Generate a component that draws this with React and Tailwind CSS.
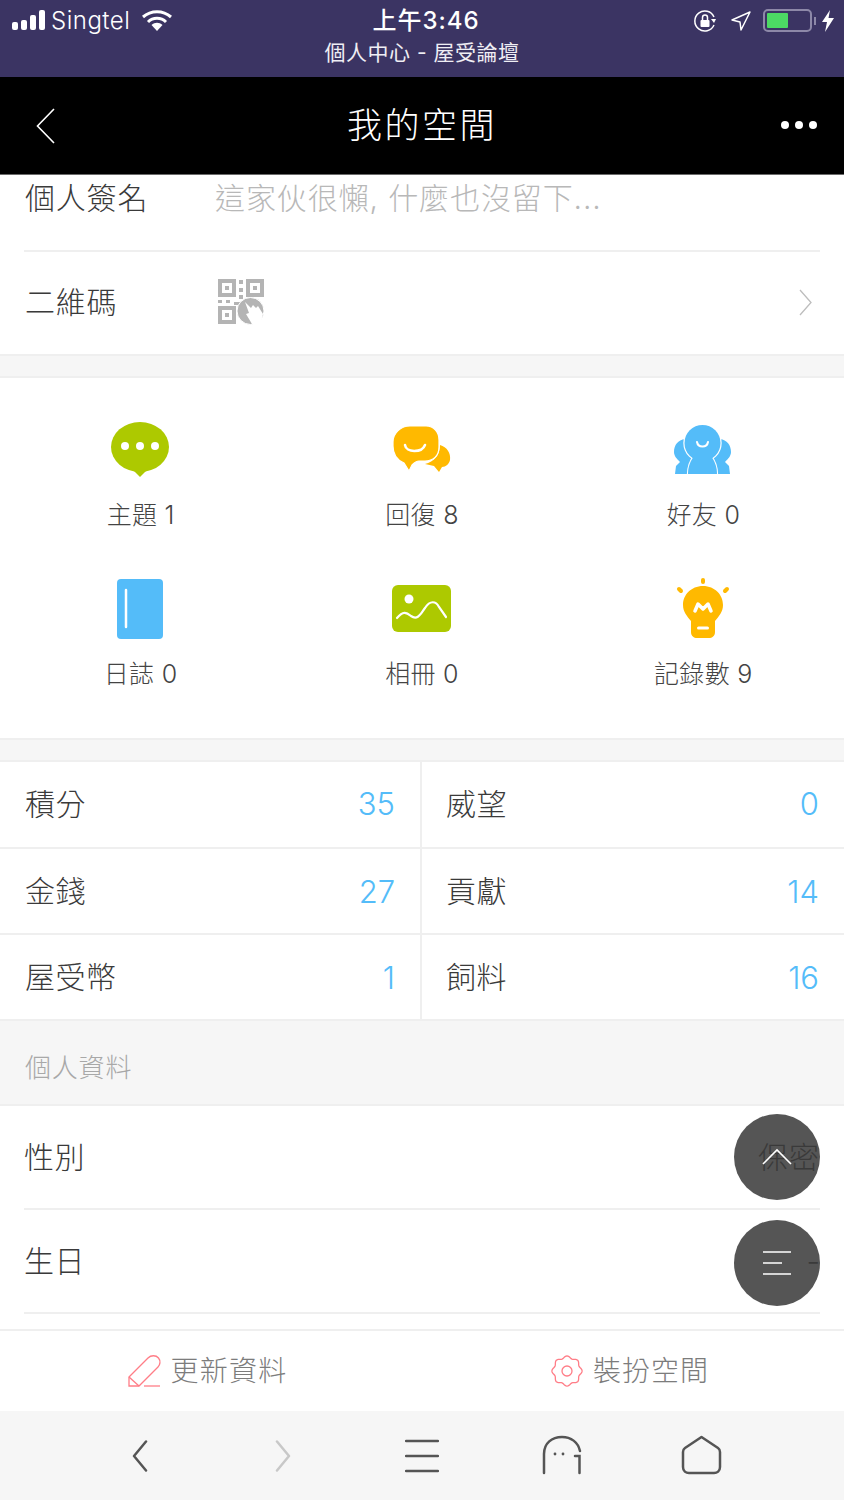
const CJK = '"Helvetica Neue", Inter, "Noto Sans CJK TC", sans-serif';

// Shortcut tiles - first row / second row
const tiles = [
  { label: '主題 1', icon: <TopicIcon /> },
  { label: '回復 8', icon: <ReplyIcon /> },
  { label: '好友 0', icon: <FriendIcon /> },
  { label: '日誌 0', icon: <DiaryIcon /> },
  { label: '相冊 0', icon: <AlbumIcon /> },
  { label: '記錄數 9', icon: <BulbIcon /> },
];

const stats = [
  { h: 'h-[87px]', pad: 'pb-[2px]', cells: [['積分', '35'], ['威望', '0']] },
  { h: 'h-[86px]', pad: '', cells: [['金錢', '27'], ['貢獻', '14']] },
  { h: 'h-[86px]', pad: '', cells: [['屋受幣', '1'], ['飼料', '16']] },
];

// Scalloped outline for the dress-up icon
function flowerPath(cx, cy, r, bump, lobes) {
  const pts = [];
  for (let i = 0; i < 96; i++) {
    const a = (i / 96) * Math.PI * 2;
    const rr = r + bump * Math.cos(lobes * a);
    pts.push(`${(cx + rr * Math.cos(a)).toFixed(2)} ${(cy + rr * Math.sin(a)).toFixed(2)}`);
  }
  return `M${pts.join(' L')} Z`;
}

function TopicIcon() {
  return (
    <svg className="-ml-[2px]" width="60" height="58" viewBox="0 0 60 58">
      <ellipse cx="30" cy="26" rx="29" ry="25" fill="#adc900" />
      <path d="M22 48 L30 56 L38 48 Z" fill="#adc900" />
      <circle cx="15" cy="25" r="4" fill="#fff" />
      <circle cx="30" cy="25" r="4" fill="#fff" />
      <circle cx="45" cy="25" r="4" fill="#fff" />
    </svg>
  );
}

function ReplyIcon() {
  return (
    <svg width="60" height="50" viewBox="0 0 60 50">
      <path d="M48 20 C55 22 59 28 58 35 C57 39 54 42 50 42 L47 47 L42 41 L33 39 C42 37 48 30 48 20 Z" fill="#ffb900" />
      <path d="M18 1 H34 C42 1 47 7 47 15 V22 C47 31 41 36 33 36 H27 C24 36 22 38 20 40 L17 46 L12 38 C5 35 1 29 1 21 V17 C1 8 9 1 18 1 Z" fill="#ffb900" stroke="#fff" strokeWidth="1.2" />
      <path d="M13 20 C14 28 30 28 33 20" fill="none" stroke="#fff" strokeWidth="2.5" strokeLinecap="round" />
    </svg>
  );
}

function FriendIcon() {
  return (
    <svg width="60" height="50" viewBox="0 0 60 50">
      {/* shoulders behind, white strokes under head + body make the gaps */}
      <path d="M12 14 C5 15 1 20 1 27 C1 31 4 34 7 37 L3 41 L2 49 H57 L56 41 L52 37 C55 34 58 31 58 27 C58 20 54 15 47 14 Z" fill="#54bcf9" />
      <circle cx="29.5" cy="18" r="18" fill="#fff" stroke="#fff" strokeWidth="2.4" />
      <path d="M22 30 C17 36 15 42 15 50 H44 C44 42 42 36 37 30 Z" fill="#fff" stroke="#fff" strokeWidth="2.4" />
      <circle cx="29.5" cy="18" r="18" fill="#54bcf9" />
      <path d="M22 30 C17 36 15 42 15 49 H44 C44 42 42 36 37 30 Z" fill="#54bcf9" />
      <path d="M24 17 C25 23 34 23 35 17" fill="none" stroke="#fff" strokeWidth="2" strokeLinecap="round" />
    </svg>
  );
}

function DiaryIcon() {
  return (
    <svg className="-ml-[2px]" width="46" height="60" viewBox="0 0 46 60">
      <rect x="0" y="0" width="46" height="60" rx="4" fill="#54bcf9" />
      <line x1="9" y1="11" x2="9" y2="48" stroke="#fff" strokeWidth="2.5" strokeLinecap="round" />
    </svg>
  );
}

function AlbumIcon() {
  return (
    <svg width="60" height="48" viewBox="0 0 60 48">
      <rect x="0" y="0" width="59" height="47" rx="6" fill="#adc900" />
      <circle cx="17" cy="14" r="4.5" fill="#fff" />
      <path d="M5 33 C11 26 14 27 19 31 C26 36 29 28 33 23 C38 15 44 16 47 22 L54 32" fill="none" stroke="#fff" strokeWidth="2.2" strokeLinecap="round" />
    </svg>
  );
}

function BulbIcon() {
  return (
    <svg width="54" height="62" viewBox="0 0 54 62">
      <g stroke="#ffb900" strokeWidth="4" strokeLinecap="round">
        <line x1="27" y1="2" x2="27" y2="4" />
        <line x1="3" y1="11" x2="5" y2="13" />
        <line x1="51" y1="11" x2="49" y2="13" />
      </g>
      <path d="M27 8 C15 8 7 17 7 27 C7 34 11 38 15 43 V54 C15 58 18 60 21 60 H33 C36 60 39 58 39 54 V43 C43 38 47 34 47 27 C47 17 39 8 27 8 Z" fill="#ffb900" />
      <path d="M19 33 L22 26 L27 31 L32 26 L35 33" fill="none" stroke="#fff" strokeWidth="3.5" strokeLinecap="round" strokeLinejoin="round" />
      <line x1="22.5" y1="50" x2="31.5" y2="50" stroke="#fff" strokeWidth="3" strokeLinecap="round" />
    </svg>
  );
}

function QrIcon() {
  return (
    <svg className="-mt-[2px]" width="48" height="48" viewBox="0 0 48 48" fill="#b4b4b4">
      <path fillRule="evenodd" d="M1 1 H19 V19 H1 Z M5 5 V15 H15 V5 Z M8 8 H12 V12 H8 Z" />
      <path fillRule="evenodd" d="M29 1 H47 V19 H29 Z M33 5 V15 H43 V5 Z M36 8 H40 V12 H36 Z" />
      <path fillRule="evenodd" d="M1 28 H19 V46 H1 Z M5 32 V42 H15 V32 Z M8 35 H12 V39 H8 Z" />
      <rect x="22" y="2" width="4" height="4" />
      <rect x="22" y="10" width="4" height="4" />
      <rect x="22" y="17" width="4" height="4" />
      <rect x="1" y="22" width="4" height="3" />
      <rect x="9" y="22" width="4" height="3" />
      <rect x="17" y="24" width="8" height="3" />
      <circle cx="33.5" cy="33" r="13.5" stroke="#fff" strokeWidth="1" />
      <path d="M28 24 L34 30 L36 27 L39 30 L41 28 L46 36 L43 46 L35 46 L29 36 L32 35 Z" fill="#fff" />
    </svg>
  );
}

function StatusBar() {
  return (
    <div className="h-[77px] bg-[#3b3463] text-white flex flex-col relative shrink-0">
      <div className="h-[41px] flex items-center justify-between pl-3 pr-[9px]">
        <div className="flex items-center w-[300px]">
          <div className="flex items-end gap-[3px] h-[21px] pb-[1px]">
            <span className="w-[6px] h-[8px] rounded-[2px] bg-white" />
            <span className="w-[6px] h-[10px] rounded-[2px] bg-white" />
            <span className="w-[6px] h-[15px] rounded-[2px] bg-white" />
            <span className="w-[6px] h-[20px] rounded-[2px] bg-white" />
          </div>
          <span className="ml-[6px] text-[24px] leading-none font-light tracking-[0.5px]">Singtel</span>
          <svg className="ml-[12px]" width="30" height="22" viewBox="0 0 30 22">
            <path d="M1 7 C9 0 21 0 29 7" fill="none" stroke="#fff" strokeWidth="3" />
            <path d="M6 12 C11 7 19 7 24 12" fill="none" stroke="#fff" strokeWidth="3" />
            <path d="M9.5 15 C13 12 17 12 20.5 15 L15 21 Z" fill="#fff" />
          </svg>
        </div>
        <span className="ml-[5px] text-[24px] leading-none font-medium tracking-[1px]">上午3:46</span>
        <div className="flex items-center justify-end w-[300px]">
          <svg width="24" height="24" viewBox="0 0 24 24" fill="none" stroke="#fff" strokeWidth="1.5">
            <path d="M21 16 A10 10 0 1 1 21 8" />
            <path d="M18 10 L23 10 L21 14 Z" fill="#fff" stroke="none" />
            <rect x="7.5" y="11" width="9" height="7" rx="1" fill="#fff" stroke="none" />
            <path d="M9.5 11 V8.5 A2.5 2.5 0 0 1 14.5 8.5 V11" />
          </svg>
          <svg className="ml-[13px]" width="22" height="22" viewBox="0 0 22 22">
            <path d="M20 2 L11 20 L10 12 L2 10 Z" fill="none" stroke="#fff" strokeWidth="1.5" strokeLinejoin="round" />
          </svg>
          <div className="ml-[11px] w-[49px] h-[23px] border-2 border-[#8d88a8] rounded-[5px] p-[2px]">
            <div className="w-[21px] h-full bg-[#4cd964] rounded-[1px]" />
          </div>
          <span className="ml-[2px] w-[2px] h-[8px] bg-[#8d88a8]" />
          <svg className="ml-[5px]" width="14" height="22" viewBox="0 0 14 22">
            <path d="M9 0 L1 12 H6 L4 22 L13 8 H7.5 Z" fill="#fff" />
          </svg>
        </div>
      </div>
      <div className="text-center text-[21px] leading-none tracking-[0.5px] text-[#efeef4] mt-[1px]">個人中心 - 屋受論壇</div>
    </div>
  );
}

function NavBar() {
  return (
    <div className="h-[98px] bg-black border-b border-[#6b6b6b] flex items-center justify-between pl-[36px] pr-[27px] shrink-0">
      <svg width="19" height="36" viewBox="0 0 19 36">
        <path d="M18 1 L1.5 18 L18 35" fill="none" stroke="#fff" strokeWidth="1.6" />
      </svg>
      <span className="text-[35px] leading-none font-light text-white tracking-[2.5px] ml-[8px]">我的空間</span>
      <div className="flex gap-[6px] -mt-[2px]">
        <span className="w-[8px] h-[8px] rounded-full bg-white" />
        <span className="w-[8px] h-[8px] rounded-full bg-white" />
        <span className="w-[8px] h-[8px] rounded-full bg-white" />
      </div>
    </div>
  );
}

function StatCell({ label, value, left, pad }) {
  return (
    <div className={`flex items-center justify-between ${pad} ${left ? 'w-[422px] pl-[25px] pr-[25px] border-r-2 border-[#efefef]' : 'flex-1 pl-[24px] pr-[25px]'}`}>
      <span className="text-[30px] font-light text-[#3a3a3a] leading-none tracking-[0.5px]">{label}</span>
      <span className="text-[31px] font-light text-[#54bcf9] leading-none">{value}</span>
    </div>
  );
}

function Fab({ children, className }) {
  return (
    <div className={`absolute right-[24px] w-[86px] h-[86px] rounded-full bg-[#555555] flex items-center justify-center ${className}`}>
      {children}
    </div>
  );
}

export default function App() {
  return (
    <div className="relative w-[844px] h-[1500px] overflow-hidden bg-white flex flex-col" style={{ fontFamily: CJK }}>
      <StatusBar />
      <NavBar />

      {/* Signature + QR rows */}
      <div className="px-[24px] shrink-0">
        <div className="h-[77px] border-b-2 border-[#efefef] flex items-start pt-[5px]">
          <span className="w-[191px] pl-[1px] text-[30px] font-light text-[#3a3a3a] leading-[36px] tracking-[0.8px]">個人簽名</span>
          <span className="text-[30px] font-light text-[#b8b8b8] leading-[36px] tracking-[0.9px]">這家伙很懶, 什麼也沒留下...</span>
        </div>
        <div className="h-[102px] flex items-center">
          <span className="w-[193px] pl-[1px] text-[30px] font-light text-[#3a3a3a] leading-none tracking-[0.8px] -mt-[2px]">二維碼</span>
          <QrIcon />
          <svg className="ml-auto mr-[8px] -mt-[2px]" width="13" height="27" viewBox="0 0 13 27">
            <path d="M1 1 L12 13.5 L1 26" fill="none" stroke="#bdbdbd" strokeWidth="1.3" />
          </svg>
        </div>
      </div>
      <div className="h-[24px] bg-[#f6f6f6] border-y-2 border-[#efefef] shrink-0" />

      {/* Shortcut tiles */}
      <div className="h-[360px] grid grid-cols-3 grid-rows-2 pt-[36px] pb-[6px] shrink-0">
        {tiles.map((t) => (
          <div key={t.label} className="flex flex-col items-center">
            <div className="h-[72px] flex items-center justify-center">{t.icon}</div>
            <span className="mt-[17px] text-[25px] font-light text-[#444444] leading-none tracking-[0.3px]">{t.label}</span>
          </div>
        ))}
      </div>
      <div className="h-[24px] bg-[#f6f6f6] border-y-2 border-[#efefef] shrink-0" />

      {/* Stats */}
      {stats.map((row) => (
        <div key={row.cells[0][0]} className={`${row.h} flex border-b-2 border-[#efefef] shrink-0`}>
          <StatCell label={row.cells[0][0]} value={row.cells[0][1]} pad={row.pad} left />
          <StatCell label={row.cells[1][0]} value={row.cells[1][1]} pad={row.pad} />
        </div>
      ))}

      {/* Profile section */}
      <div className="h-[85px] bg-[#f6f6f6] border-b-2 border-[#efefef] flex items-center pl-[25px] pt-[10px] text-[26px] font-light text-[#a8a8a8] tracking-[0.8px] shrink-0">
        個人資料
      </div>
      <div className="px-[24px] shrink-0">
        <div className="h-[104px] border-b-2 border-[#efefef] flex items-center justify-between">
          <span className="text-[30px] font-light text-[#3a3a3a] leading-none tracking-[0.5px]">性別</span>
          <span className="relative z-10 text-[30px] font-light text-[#3a3a3a] leading-none tracking-[1px]">保密</span>
        </div>
        <div className="h-[104px] border-b-2 border-[#efefef] flex items-center justify-between">
          <span className="text-[30px] font-light text-[#3a3a3a] leading-none tracking-[0.5px]">生日</span>
          <span className="relative z-10 text-[30px] font-light text-[#3a3a3a] leading-none">-</span>
        </div>
      </div>

      {/* Footer actions */}
      <div className="mt-[15px] h-[82px] border-t-2 border-[#efefef] flex shrink-0">
        <div className="w-[422px] flex items-center justify-center pr-[6px] gap-[9px]">
          <svg width="33" height="33" viewBox="0 0 33 33" fill="none" stroke="#ff7d87" strokeWidth="1.3">
            <path d="M1 22 L20 3 C23 0 28 0 30.5 3 C33 6 32 10 30 12 L11 31 H1 Z" />
            <path d="M1 22 L11 31" />
            <path d="M16 31 H32" />
          </svg>
          <span className="text-[28px] font-light text-[#7c7c7c] leading-none tracking-[1.3px]">更新資料</span>
        </div>
        <div className="w-[422px] flex items-center justify-center pr-[6px] gap-[10px]">
          <svg width="32" height="32" viewBox="0 0 32 32" fill="none" stroke="#ff7d87" strokeWidth="1.3">
            <path d={flowerPath(16, 16, 14, 1.1, 8)} />
            <circle cx="16" cy="16" r="5" />
          </svg>
          <span className="text-[28px] font-light text-[#7c7c7c] leading-none tracking-[1px]">裝扮空間</span>
        </div>
      </div>

      {/* Browser toolbar */}
      <div className="flex-1 bg-[#f6f6f6] relative">
        <svg className="absolute left-[132px] top-[29px]" width="16" height="32" viewBox="0 0 16 32">
          <path d="M14 1.5 L2 16 L14 30.5" fill="none" stroke="#555" strokeWidth="2.5" strokeLinecap="round" strokeLinejoin="round" />
        </svg>
        <svg className="absolute left-[275px] top-[29px]" width="16" height="32" viewBox="0 0 16 32">
          <path d="M2 1.5 L14 16 L2 30.5" fill="none" stroke="#c8c8c8" strokeWidth="2.5" strokeLinecap="round" strokeLinejoin="round" />
        </svg>
        <svg className="absolute left-[405px] top-[28px]" width="34" height="34" viewBox="0 0 34 34">
          <path d="M1 2 H33 M1 17 H33 M1 32 H33" stroke="#555" strokeWidth="2.5" strokeLinecap="round" />
        </svg>
        <svg className="absolute left-[542px] top-[24px]" width="40" height="40" viewBox="0 0 40 40" fill="none" stroke="#555" strokeWidth="2.5" strokeLinecap="round">
          <path d="M2 38 V19 C2 8 10 2 20 2 C29 2 36 7 38 16" />
          <path d="M33 21 H37.5 V38" />
          <circle cx="13" cy="19" r="1.4" fill="#555" stroke="none" />
          <circle cx="21" cy="19" r="1.4" fill="#555" stroke="none" />
        </svg>
        <svg className="absolute left-[681px] top-[24px]" width="41" height="40" viewBox="0 0 41 40">
          <path d="M20.5 2 L37 13 C38.5 14 39 15 39 17 V32 C39 36 36 38 33 38 H8 C5 38 2 36 2 32 V17 C2 15 2.5 14 4 13 Z" fill="none" stroke="#555" strokeWidth="2.5" strokeLinejoin="round" />
        </svg>
      </div>

      {/* Floating buttons - row values stay visible through z-10, icons on top */}
      <Fab className="top-[1114px]">
        <svg className="relative z-20" width="30" height="18" viewBox="0 0 30 18">
          <path d="M1 16 L15 2 L29 16" fill="none" stroke="#fff" strokeWidth="1.6" />
        </svg>
      </Fab>
      <Fab className="top-[1220px]">
        <svg className="relative z-20" width="30" height="26" viewBox="0 0 30 26">
          <path d="M1 2 H29 M1 13 H20 M1 24 H29" stroke="#fff" strokeWidth="1.6" />
        </svg>
      </Fab>
    </div>
  );
}
